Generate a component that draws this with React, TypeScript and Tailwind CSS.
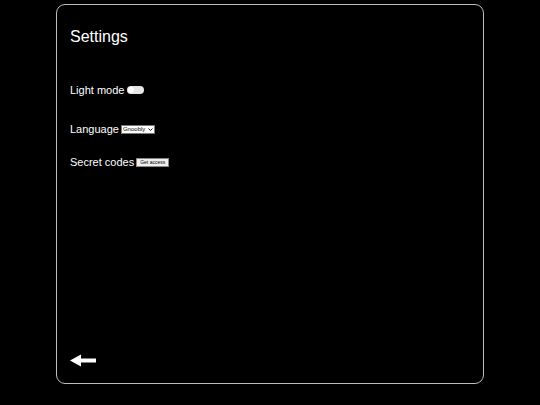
import React from 'react';

export default function App() {
  return (
    <div className="w-[540px] h-[405px] bg-black text-white font-['Liberation_Sans',Arial,sans-serif] pt-[4px]">
      <div className="ml-[56px] w-[428px] h-[380px] border border-[#bdbdbd] rounded-[9px] flex flex-col pl-[13px] pt-[22px] pb-[16px]">
        <h1 className="text-[16px] leading-[20px]">Settings</h1>

        <div className="mt-[36px] flex items-center gap-[3px] text-[11px] leading-[14px]">
          <span>Light mode</span>
          <span className="w-[17px] h-[8px] rounded-full bg-[#e6e6e6] flex items-center pl-[1px]">
            <span className="w-[6px] h-[6px] rounded-full bg-white" />
          </span>
        </div>

        <div className="mt-[25px] flex items-center gap-[2px] text-[11px] leading-[14px]">
          <span>Language</span>
          <span className="flex items-center h-[9px] bg-white text-black text-[6px] leading-none px-[1px] border border-[#777] gap-[3px]">
            <span>Gnoobly</span>
            <svg width="5" height="3" viewBox="0 0 5 3">
              <path d="M0.5 0.5 L2.5 2.5 L4.5 0.5" stroke="black" fill="none" strokeWidth="0.9" />
            </svg>
          </span>
        </div>

        <div className="mt-[19px] flex items-center gap-[2px] text-[11px] leading-[14px]">
          <span>Secret codes</span>
          <button className="h-[9px] bg-[#efefef] text-black text-[5px] leading-none px-[3px] border border-[#888]">
            Get access
          </button>
        </div>

        <div className="mt-auto">
          <svg width="26" height="13" viewBox="0 0 26 13">
            <path d="M0 6.5 L11 0.5 L11 4.5 L26 4.5 L26 8.5 L11 8.5 L11 12.5 Z" fill="white" />
          </svg>
        </div>
      </div>
    </div>
  );
}
